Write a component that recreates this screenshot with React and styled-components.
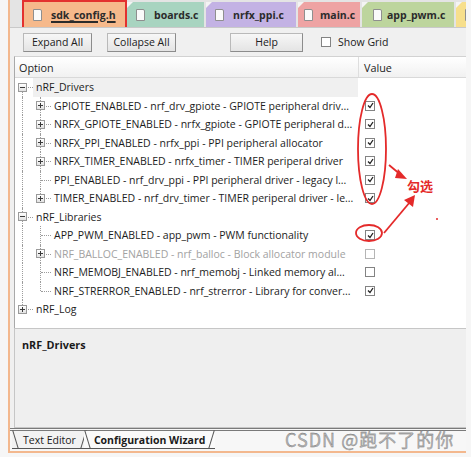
import React from "react";
import styled, { createGlobalStyle } from "styled-components";

const GlobalStyle = createGlobalStyle`
  html, body {
    margin: 0;
    padding: 0;
    background: #f6f6f6;
  }
  body {
    font-family: "Open Sans", "Noto Sans CJK SC", sans-serif;
    color: #1c1c1c;
  }
`;

const Page = styled.div`
  position: relative;
  width: 471px;
  height: 457px;
  overflow: hidden;
  box-sizing: border-box;
  padding-left: 8px;
  background: #f6f6f6;
`;

const Window = styled.div`
  width: 458px;
  height: 453px;
  box-sizing: border-box;
  display: flex;
  flex-direction: column;
  background: #f0f0f0;
  border-left: 2px solid #f3b88e;
  border-bottom: 2px solid #f3b88e;
`;

const TabStrip = styled.div`
  height: 28px;
  flex: 0 0 28px;
  box-sizing: border-box;
  display: flex;
  align-items: flex-end;
  gap: 2px;
  padding-left: 14px;
  background: #e4e4e4;
  border-bottom: 1px solid #c9c9c9;
  overflow: hidden;
`;

const FileTab = styled.div`
  position: relative;
  flex: 0 0 ${(p) => p.$w}px;
  height: 25px;
  box-sizing: border-box;
  display: flex;
  align-items: center;
  gap: ${(p) => p.$gap || 9}px;
  padding-left: ${(p) => p.$pl || 9}px;
  background: ${(p) => p.$bg};
  font-size: 10.5px;
  font-weight: 700;
  color: #2b2b2b;
  outline: ${(p) => (p.$marked ? "2px solid #e3312f" : "none")};
  outline-offset: 0;

  &::before {
    content: "";
    position: absolute;
    left: 0;
    top: 0;
    border-top: 6px solid #f4f4f4;
    border-right: 6px solid transparent;
    display: ${(p) => (p.$marked ? "none" : "block")};
  }
`;

const TabName = styled.span`
  text-decoration: ${(p) => (p.$active ? "underline" : "none")};
  text-decoration-thickness: 2px;
  text-underline-offset: 2px;
  white-space: nowrap;
`;

const DocIcon = styled.span`
  flex: 0 0 9px;
  height: 12px;
  box-sizing: border-box;
  background: #fafafa;
  border: 1px solid #8f8f8f;
  border-radius: 0 2px 0 0;
`;

const Toolbar = styled.div`
  height: 28px;
  flex: 0 0 28px;
  display: flex;
  align-items: center;
  padding-left: 13px;
  font-size: 10.5px;
`;

const Button = styled.div`
  width: ${(p) => p.$w}px;
  height: 19px;
  margin-left: ${(p) => p.$ml || 0}px;
  box-sizing: border-box;
  display: flex;
  align-items: center;
  justify-content: center;
  background: linear-gradient(#f7f7f7, #e4e4e4);
  border: 1px solid #b9b9b9;
  border-right-color: #8c8c8c;
  border-bottom-color: #8c8c8c;
  color: #202020;
`;

const CheckLabel = styled.label`
  display: flex;
  align-items: center;
  gap: 7px;
  margin-left: 18px;
  color: #202020;
`;

const Box = styled.span`
  width: ${(p) => p.$size || 10}px;
  height: ${(p) => p.$size || 10}px;
  box-sizing: border-box;
  display: flex;
  align-items: center;
  justify-content: center;
  background: #fff;
  border: 1px solid ${(p) => (p.$faint ? "#b5b5b5" : "#838383")};
`;

const ListBox = styled.div`
  margin-left: 4px;
  height: 272px;
  flex: 0 0 272px;
  box-sizing: border-box;
  display: flex;
  flex-direction: column;
  background: #fff;
  border-left: 1px solid #a9a9a9;
  border-top: 1px solid #d2d2d2;
`;

const HeaderRow = styled.div`
  height: 20px;
  flex: 0 0 20px;
  display: grid;
  grid-template-columns: 343px 1fr;
  background: linear-gradient(#ffffff, #f1f1f1);
  border-bottom: 1px solid #d9d9d9;
  font-size: 10.8px;
`;

const HeaderCell = styled.div`
  display: flex;
  align-items: center;
  padding-left: ${(p) => (p.$value ? 5 : 4)}px;
  border-left: ${(p) => (p.$value ? "1px solid #dedede" : "none")};
`;

const Row = styled.div`
  height: 18.5px;
  display: grid;
  grid-template-columns: 343px 1fr;
  font-size: 10.5px;
`;

const OptionCell = styled.div`
  display: flex;
  align-items: stretch;
  overflow: hidden;
  white-space: nowrap;
  color: ${(p) => (p.$dim ? "#a2a2a2" : "#1c1c1c")};
`;

const Label = styled.span`
  display: flex;
  align-items: center;
  padding-left: 3px;
  padding-right: 3px;
  background: ${(p) => (p.$selected ? "#f0f0f0" : "transparent")};
  flex: ${(p) => (p.$selected ? 1 : "none")};
`;

const Guide = styled.span`
  position: relative;
  flex: 0 0 18px;
  display: flex;
  align-items: center;

  &::before {
    content: "";
    display: ${(p) => (p.$v ? "block" : "none")};
    position: absolute;
    left: 7px;
    top: ${(p) => (p.$v === "down" ? "50%" : "0")};
    bottom: ${(p) => (p.$v === "up" ? "50%" : "0")};
    border-left: 1px dotted #9c9c9c;
  }

  &::after {
    content: "";
    display: ${(p) => (p.$h ? "block" : "none")};
    position: absolute;
    left: 8px;
    right: 0;
    top: 50%;
    border-top: 1px dotted #9c9c9c;
  }
`;

const Expander = styled.span`
  position: relative;
  z-index: 1;
  width: 9px;
  height: 9px;
  margin-left: 3px;
  box-sizing: border-box;
  background: linear-gradient(#ffffff, #e2e2e2);
  border: 1px solid #9a9a9a;

  &::before {
    content: "";
    position: absolute;
    left: 1px;
    right: 1px;
    top: 3px;
    height: 1px;
    background: #3a3a3a;
  }

  &::after {
    content: "";
    display: ${(p) => (p.$open ? "none" : "block")};
    position: absolute;
    top: 1px;
    bottom: 1px;
    left: 3px;
    width: 1px;
    background: #3a3a3a;
  }
`;

const ValueCell = styled.div`
  display: flex;
  align-items: center;
  padding-left: 7px;
`;

const Description = styled.div`
  margin-left: 4px;
  height: 100px;
  flex: 0 0 100px;
  box-sizing: border-box;
  padding: 8px 0 0 7px;
  background: #efefef;
  border: 1px solid #c6c6c6;
  border-right: none;
  font-size: 10.8px;
  font-weight: 700;
  color: #1a1a1a;
`;

const BottomStrip = styled.div`
  flex: 1;
  display: flex;
  align-items: flex-start;
  padding-left: 2px;
  border-top: 3px double #7a7a7a;
  background: #f7f7f7;
`;

const BottomTab = styled.div`
  position: relative;
  height: 17px;
  display: flex;
  align-items: center;
  padding: 0 ${(p) => (p.$active ? 10 : 11)}px;
  margin-left: ${(p) => (p.$active ? -3 : 0)}px;
  border-bottom: 1px solid #555;
  font-size: 10.5px;
  font-weight: ${(p) => (p.$active ? 700 : 400)};
  color: #1a1a1a;
  background: ${(p) => (p.$active ? "#fafafa" : "#f2f2f2")};

  &::before,
  &::after {
    content: "";
    position: absolute;
    top: -1px;
    width: 1px;
    height: 19px;
    background: #555;
  }
  &::before {
    left: 3px;
    transform: rotate(-17deg);
  }
  &::after {
    right: 3px;
    transform: rotate(17deg);
  }
`;

const Watermark = styled.div`
  position: absolute;
  left: 285px;
  top: 426px;
  font-family: "Noto Sans CJK SC", sans-serif;
  font-size: 18px;
  letter-spacing: 1px;
  color: #b4b4b4;
  -webkit-text-stroke: 0.3px #6e6e6e;
  text-shadow: 0 0 1px #ffffff;
  pointer-events: none;
`;

const Marks = styled.svg`
  position: absolute;
  left: 0;
  top: 0;
  pointer-events: none;
`;

const MarkText = styled.div`
  position: absolute;
  left: 407px;
  top: 176px;
  font-family: "Noto Sans CJK SC", sans-serif;
  font-size: 13px;
  font-weight: 700;
  color: #e42a2a;
`;

const Check = () => (
  <svg width="7" height="7" viewBox="0 0 7 7">
    <path d="M1 3.5 L3 5.5 L6 1" fill="none" stroke="#222" strokeWidth="1.3" />
  </svg>
);

const rows = [
  { level: 0, text: "nRF_Drivers", exp: "open", v: "down", selected: true },
  { level: 1, text: "GPIOTE_ENABLED - nrf_drv_gpiote - GPIOTE peripheral driv...", exp: "closed", v: "full", val: "on" },
  { level: 1, text: "NRFX_GPIOTE_ENABLED - nrfx_gpiote - GPIOTE peripheral d...", exp: "closed", v: "full", val: "on" },
  { level: 1, text: "NRFX_PPI_ENABLED - nrfx_ppi - PPI peripheral allocator", exp: "closed", v: "full", val: "on" },
  { level: 1, text: "NRFX_TIMER_ENABLED - nrfx_timer - TIMER periperal driver", exp: "closed", v: "full", val: "on" },
  { level: 1, text: "PPI_ENABLED  - nrf_drv_ppi - PPI peripheral driver - legacy l...", v: "full", val: "on" },
  { level: 1, text: "TIMER_ENABLED - nrf_drv_timer - TIMER periperal driver - le...", exp: "closed", v: "up", val: "on" },
  { level: 0, text: "nRF_Libraries", exp: "open", v: "full" },
  { level: 1, text: "APP_PWM_ENABLED  - app_pwm - PWM functionality", v: "full", val: "on" },
  { level: 1, text: "NRF_BALLOC_ENABLED - nrf_balloc - Block allocator module", exp: "closed", v: "full", val: "off", dim: true },
  { level: 1, text: "NRF_MEMOBJ_ENABLED  - nrf_memobj - Linked memory al...", v: "full", val: "off" },
  { level: 1, text: "NRF_STRERROR_ENABLED  - nrf_strerror - Library for conver...", v: "up", val: "on" },
  { level: 0, text: "nRF_Log", exp: "closed", v: "up" },
];

const tabs = [
  { name: "sdk_config.h", w: 101, bg: "#f6b98b", active: true },
  { name: "boards.c", w: 77, bg: "#a8d4c0" },
  { name: "nrfx_ppi.c", w: 90, bg: "#c3b2e4" },
  { name: "main.c", w: 62, bg: "#eea3a3", pl: 6, gap: 7 },
  { name: "app_pwm.c", w: 92, bg: "#bdd59d", pl: 11, gap: 5 },
  { name: "", w: 20, bg: "#f7df8c" },
];

const TreeRow = ({ row }) => {
  const expander = row.exp ? <Expander $open={row.exp === "open"} /> : null;
  return (
    <Row>
      <OptionCell $dim={row.dim}>
        {row.level === 0 ? (
          <Guide $v={row.v} $h>
            {expander}
          </Guide>
        ) : (
          <>
            <Guide $v="full" />
            <Guide $v={row.v} $h>
              {expander}
            </Guide>
          </>
        )}
        <Label $selected={row.selected}>{row.text}</Label>
      </OptionCell>
      <ValueCell>
        {row.val && (
          <Box $faint={row.dim}>{row.val === "on" && <Check />}</Box>
        )}
      </ValueCell>
    </Row>
  );
};

export default function App() {
  return (
    <Page>
      <GlobalStyle />
      <Window>
        <TabStrip>
          {tabs.map((t, i) => (
            <FileTab
              key={i}
              $w={t.w}
              $bg={t.bg}
              $pl={t.pl}
              $gap={t.gap}
              $marked={t.active}
            >
              <DocIcon />
              {t.name && <TabName $active={t.active}>{t.name}</TabName>}
            </FileTab>
          ))}
        </TabStrip>
        <Toolbar>
          <Button $w={69}>Expand All</Button>
          <Button $w={69} $ml={15}>Collapse All</Button>
          <Button $w={73} $ml={54}>Help</Button>
          <CheckLabel>
            <Box $size={10} />
            Show Grid
          </CheckLabel>
        </Toolbar>
        <ListBox>
          <HeaderRow>
            <HeaderCell>Option</HeaderCell>
            <HeaderCell $value>Value</HeaderCell>
          </HeaderRow>
          {rows.map((r, i) => (
            <TreeRow key={i} row={r} />
          ))}
        </ListBox>
        <Description>nRF_Drivers</Description>
        <BottomStrip>
          <BottomTab>Text Editor</BottomTab>
          <BottomTab $active>Configuration Wizard</BottomTab>
        </BottomStrip>
      </Window>
      <Watermark>CSDN @跑不了的你</Watermark>
      <Marks width="471" height="457">
        <g fill="none" stroke="#e42a2a" strokeWidth="1.8">
          <ellipse cx="372" cy="149" rx="14" ry="55" />
          <ellipse cx="369" cy="233" rx="13" ry="8" />
          <path d="M389 165 L401 175" />
          <path d="M384 233 L410 202" />
        </g>
        <g fill="#e42a2a">
          <path d="M398 169 L407 179 L395 178 Z" />
          <path d="M404 200 L415 195 L413 207 Z" />
          <circle cx="437" cy="219" r="1" />
        </g>
      </Marks>
      <MarkText>勾选</MarkText>
    </Page>
  );
}
